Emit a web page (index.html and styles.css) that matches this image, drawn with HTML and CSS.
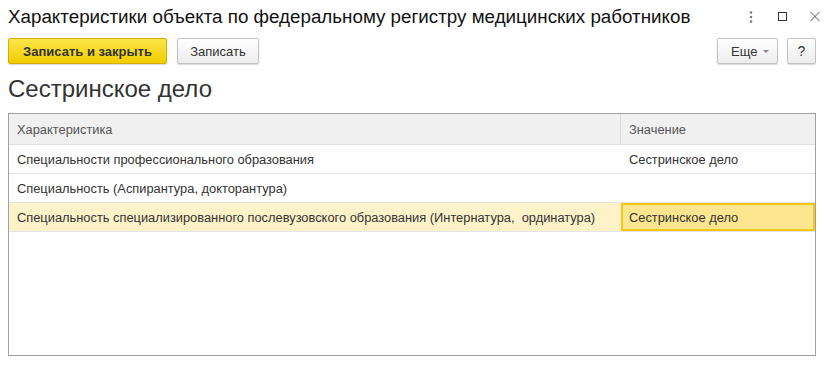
FILE: index.html
```html
<!DOCTYPE html>
<html lang="ru">
<head>
<meta charset="utf-8">
<title>Характеристики объекта</title>
<link rel="stylesheet" href="styles.css">
</head>
<body>
<div class="window">
  <div class="titlebar">
    <div class="title">Характеристики объекта по федеральному регистру медицинских работников</div>
    <div class="wincontrols">
      <svg class="wc" width="12" height="14" viewBox="0 0 12 14"><circle cx="6" cy="2.5" r="1.3" fill="#777"/><circle cx="6" cy="7" r="1.3" fill="#777"/><circle cx="6" cy="11.5" r="1.3" fill="#777"/></svg>
      <svg class="wc" width="12" height="14" viewBox="0 0 12 14"><rect x="1.5" y="2.5" width="8" height="8" fill="none" stroke="#333" stroke-width="1"/></svg>
      <svg class="wc" width="12" height="14" viewBox="0 0 12 14"><path d="M1.5 2 L10.5 11 M10.5 2 L1.5 11" stroke="#555" stroke-width="1"/></svg>
    </div>
  </div>
  <div class="toolbar">
    <button class="btn btn-primary">Записать и закрыть</button>
    <button class="btn btn-save">Записать</button>
    <div class="spacer"></div>
    <button class="btn btn-more">Еще <span class="caret"></span></button>
    <button class="btn btn-help">?</button>
  </div>
  <h1 class="heading">Сестринское дело</h1>
  <div class="table">
    <div class="row head">
      <div class="cell c1">Характеристика</div>
      <div class="cell c2">Значение</div>
    </div>
    <div class="row">
      <div class="cell c1">Специальности профессионального образования</div>
      <div class="cell c2">Сестринское дело</div>
    </div>
    <div class="row">
      <div class="cell c1">Специальность (Аспирантура, докторантура)</div>
      <div class="cell c2"></div>
    </div>
    <div class="row selected">
      <div class="cell c1">Специальность специализированного послевузовского образования (Интернатура,&nbsp; ординатура)</div>
      <div class="cell c2 active">Сестринское дело</div>
    </div>
  </div>
</div>
</body>
</html>
```

FILE: styles.css
```css
* { box-sizing: border-box; }
html, body {
  margin: 0;
  padding: 0;
  background: #fff;
}
body {
  font-family: Arial, "Liberation Sans", sans-serif;
  color: #333;
  width: 827px;
  height: 366px;
  overflow: hidden;
}
.window {
  display: flex;
  flex-direction: column;
  height: 366px;
  padding: 0 11px 10px 8px;
}
.titlebar {
  display: flex;
  align-items: center;
  height: 33px;
  padding-top: 1px;
}
.title {
  flex: 1;
  font-size: 18.8px;
  color: #111;
  white-space: nowrap;
}
.wincontrols {
  display: flex;
  gap: 20px;
  margin-right: -5px;
  align-items: center;
}
.wc { display: block; }
.toolbar {
  display: flex;
  align-items: center;
  gap: 10px;
  margin-top: 5px;
  height: 26px;
}
.spacer { flex: 1; }
.btn {
  font-family: Arial, "Liberation Sans", sans-serif;
  font-size: 13px;
  color: #333;
  height: 26px;
  padding: 0 12px;
  border: 1px solid #c2c2c2;
  border-radius: 2px;
  background: linear-gradient(#ffffff, #ececec);
  box-shadow: 0 1px 1px rgba(0,0,0,0.15);
  margin: 0;
}
.btn-primary {
  width: 159px;
  font-weight: bold;
  background: linear-gradient(#fbe64a, #f3cc00);
  border-color: #d6ae00;
  color: #333;
}
.btn-save { width: 82px; }
.btn-more {
  width: 61px;
  padding: 0 8px 0 13px;
  display: flex;
  align-items: center;
  gap: 6px;
}
.caret {
  width: 0;
  height: 0;
  border-left: 3px solid transparent;
  border-right: 3px solid transparent;
  border-top: 3px solid #888;
}
.btn-help {
  width: 29px;
  padding: 0;
  margin-left: -1px;
  font-size: 14px;
}
.heading {
  margin: 12px 0 0 0;
  font-weight: normal;
  font-size: 24px;
  color: #333;
  height: 36px;
  line-height: 26px;
}
.table {
  flex: 1;
  border: 1px solid #a0a0a0;
  margin-top: 1px;
}
.row {
  display: grid;
  grid-template-columns: 612px 1fr;
  height: 29px;
  border-bottom: 1px solid #e4e4e4;
  font-size: 12.85px;
}
.row.head {
  height: 31px;
  background: #f0f0f0;
  border-bottom: 1px solid #e0e0e0;
  color: #555;
}
.row.head .c1 { border-right: 1px solid #d8d8d8; }
.cell {
  display: flex;
  align-items: center;
  padding: 0 8px;
  white-space: nowrap;
  overflow: hidden;
}
.row.selected { background: #fdf2c8; }
.cell.active {
  background: #fde68f;
  border: 2px solid #f5c518;
  padding-left: 6px;
}
```
